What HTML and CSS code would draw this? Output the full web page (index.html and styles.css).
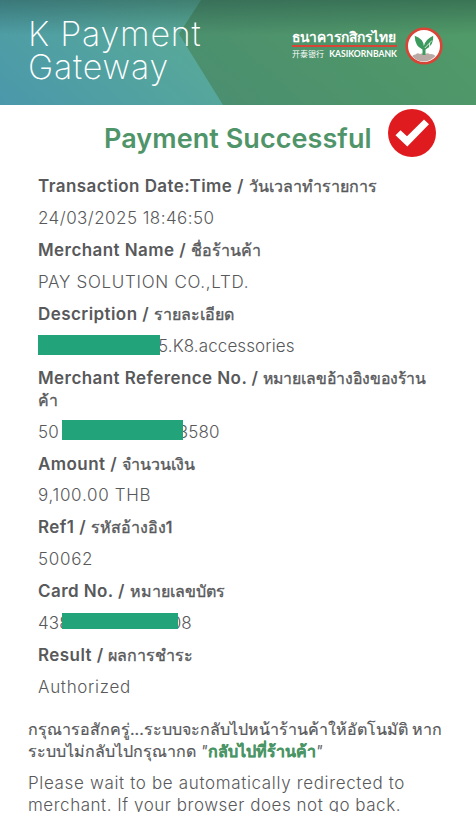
FILE: index.html
```html
<!DOCTYPE html>
<html lang="th">
<head>
<meta charset="UTF-8">
<meta name="viewport" content="width=device-width, initial-scale=1.0">
<title>K Payment Gateway</title>
<link rel="stylesheet" href="styles.css">
</head>
<body>

<header class="header">
<h1 class="brand">K Payment<br>Gateway</h1>
<div class="bank">
<div class="bank-name">
<div class="bank-th">ธนาคารกสิกรไทย</div>
<div class="bank-en"><span class="bank-cn">开泰银行</span><span class="bank-latin">KASIKORNBANK</span></div>
</div>
<svg class="bank-logo" width="38" height="38" viewBox="0 0 38 38">
<circle cx="19" cy="19" r="17.3" fill="#fff" stroke="#d94436" stroke-width="2.6"/>
<path d="M7.2 29.2q1-2 3.5-1.8q2-2 4.2-.3q3-1.500 5 0q3-1.800 5 .2q3-.8 5.500 1.800Q25.500 34.500 19 34.500Q12 34.500 7.200 29.200z" fill="#b9aaa5"/>
<path d="M17.500 28V22.500Q10 19.500 9.700 8.800Q18 11.500 18.900 19Q20.500 12.200 28.200 8.800Q29 18.500 20.500 22.500V28z" fill="#3c9a5c"/>
<path d="M19.800 21L27 13.500M24.600 16V20" stroke="#fff" stroke-width=".8"/>
</svg>
</div>
</header>

<main class="content">
<div class="status">
<h2 class="status-text">Payment Successful</h2>
<svg class="status-icon" width="48" height="48" viewBox="0 0 48 48">
<circle cx="24" cy="24" r="24" fill="#df1b1f"/>
<path d="M7.500 26.200L12.500 21.300L19 27.300L36 10.500L41 15.200L19.300 37.500z" fill="#fff"/>
</svg>
</div>

<dl class="details">
<dt>Transaction Date:Time / <span class="th">วันเวลาทำรายการ</span></dt>
<dd>24/03/2025 18:46:50</dd>
<dt>Merchant Name / <span class="th">ชื่อร้านค้า</span></dt>
<dd class="wide">PAY SOLUTION CO.,LTD.</dd>
<dt>Description / <span class="th">รายละเอียด</span></dt>
<dd class="narrow"><span class="mask mask-desc"></span>5.K8.accessories</dd>
<dt>Merchant Reference No. / <span class="th th-tight">หมายเลขอ้างอิงของร้าน<br>ค้า</span></dt>
<dd class="narrow">50<span class="mask mask-ref"></span>3580</dd>
<dt>Amount / <span class="th">จำนวนเงิน</span></dt>
<dd class="wide">9,100.00 THB</dd>
<dt>Ref1 / <span class="th">รหัสอ้างอิง1</span></dt>
<dd class="wide">50062</dd>
<dt>Card No. / <span class="th">หมายเลขบัตร</span></dt>
<dd class="narrow">438<span class="mask mask-card"></span>08</dd>
<dt>Result / <span class="th">ผลการชำระ</span></dt>
<dd class="wide">Authorized</dd>
</dl>

<div class="note">
<p class="note-th">กรุณารอสักครู่...ระบบจะกลับไปหน้าร้านค้าให้อัตโนมัติ หาก<br>ระบบไม่กลับไปกรุณากด <span class="quote">"</span><a class="back">กลับไปที่ร้านค้า</a><span class="quote">"</span></p>
<p class="note-en">Please wait to be automatically redirected to<br><span class="note-last">merchant. If your browser does not go back.</span></p>
</div>
</main>

</body>
</html>
```
FILE: styles.css
```css
* {
box-sizing: border-box;
}
body {
margin: 0;
height: 823px;
overflow: hidden;
background: #fff;
color: #58595b;
font-family: Inter, "Noto Sans", sans-serif;
font-size: 17px;
line-height: 22px;
white-space: nowrap;
}
h1, h2, p, dl, dd {
margin: 0;
}
.header {
position: relative;
display: flex;
justify-content: space-between;
height: 105px;
padding: 17px 33px 0 28px;
background: linear-gradient(to bottom, rgba(25, 60, 60, .4), transparent 35px), linear-gradient(40deg, #4a98ab, #58a999 45%, #5cb28e 65%);
}
.header::before {
content: "";
position: absolute;
inset: 0;
clip-path: polygon(201px 0, 100% 0, 100% 100%, 223px 100%, 179px 34px);
background: linear-gradient(to bottom, rgba(25, 60, 60, .4), transparent 35px), linear-gradient(40deg, #458879, #4d926c 55%, #519b67);
}
.brand {
position: relative;
color: #fff;
font-size: 34px;
font-weight: 200;
letter-spacing: .8px;
line-height: 33px;
}
.bank {
position: relative;
display: flex;
gap: 8px;
padding-top: 10px;
}
.bank-name {
width: 105px;
color: #fff;
}
.bank-th {
height: 20px;
border-bottom: 2px solid #d94436;
font-size: 13.8px;
font-weight: 600;
line-height: 20px;
}
.bank-en {
display: flex;
justify-content: space-between;
padding-top: 2px;
font-size: 8px;
line-height: 10px;
}
.bank-cn {
font-family: "Noto Sans CJK SC", sans-serif;
}
.bank-latin {
font-family: Lato, sans-serif;
font-size: 8.6px;
font-weight: 700;
}
.status {
display: flex;
gap: 17px;
padding: 4px 0 0 104px;
}
.status-text {
width: 267px;
padding-top: 14px;
color: #509569;
font-size: 27px;
font-weight: 600;
letter-spacing: .06px;
line-height: 32px;
}
.details {
margin-top: 18px;
padding-left: 38px;
}
dt, dd {
min-height: 22px;
margin-bottom: 9.94px;
}
dt {
font-weight: 600;
letter-spacing: .43px;
}
dd {
display: flex;
font-weight: 300;
letter-spacing: .45px;
}
.th {
font-size: 16px;
font-weight: 500;
letter-spacing: 0;
line-height: 0;
-webkit-text-stroke: .35px #58595b;
}
.th-tight {
font-size: 15.8px;
}
.wide {
letter-spacing: .7px;
}
.narrow {
letter-spacing: .1px;
}
.mask {
z-index: 1;
height: 20px;
background: #22a37a;
}
.mask-desc {
width: 122px;
margin-right: -2px;
}
.mask-ref {
width: 121px;
margin: -1px -5px 0 3px;
}
.mask-card {
width: 116px;
height: 16px;
margin: 1px -7px 0 -8px;
}
.note {
height: 94px;
margin-top: 20px;
padding-left: 28px;
overflow: hidden;
}
.note p {
margin-bottom: 10px;
}
.note-th {
font-size: 16px;
-webkit-text-stroke: .2px;
}
.quote {
font-style: italic;
font-weight: 300;
}
.note-en {
font-weight: 300;
letter-spacing: .65px;
}
.note-last {
letter-spacing: .53px;
}
.back {
color: #4a9565;
font-weight: 600;
}
```
